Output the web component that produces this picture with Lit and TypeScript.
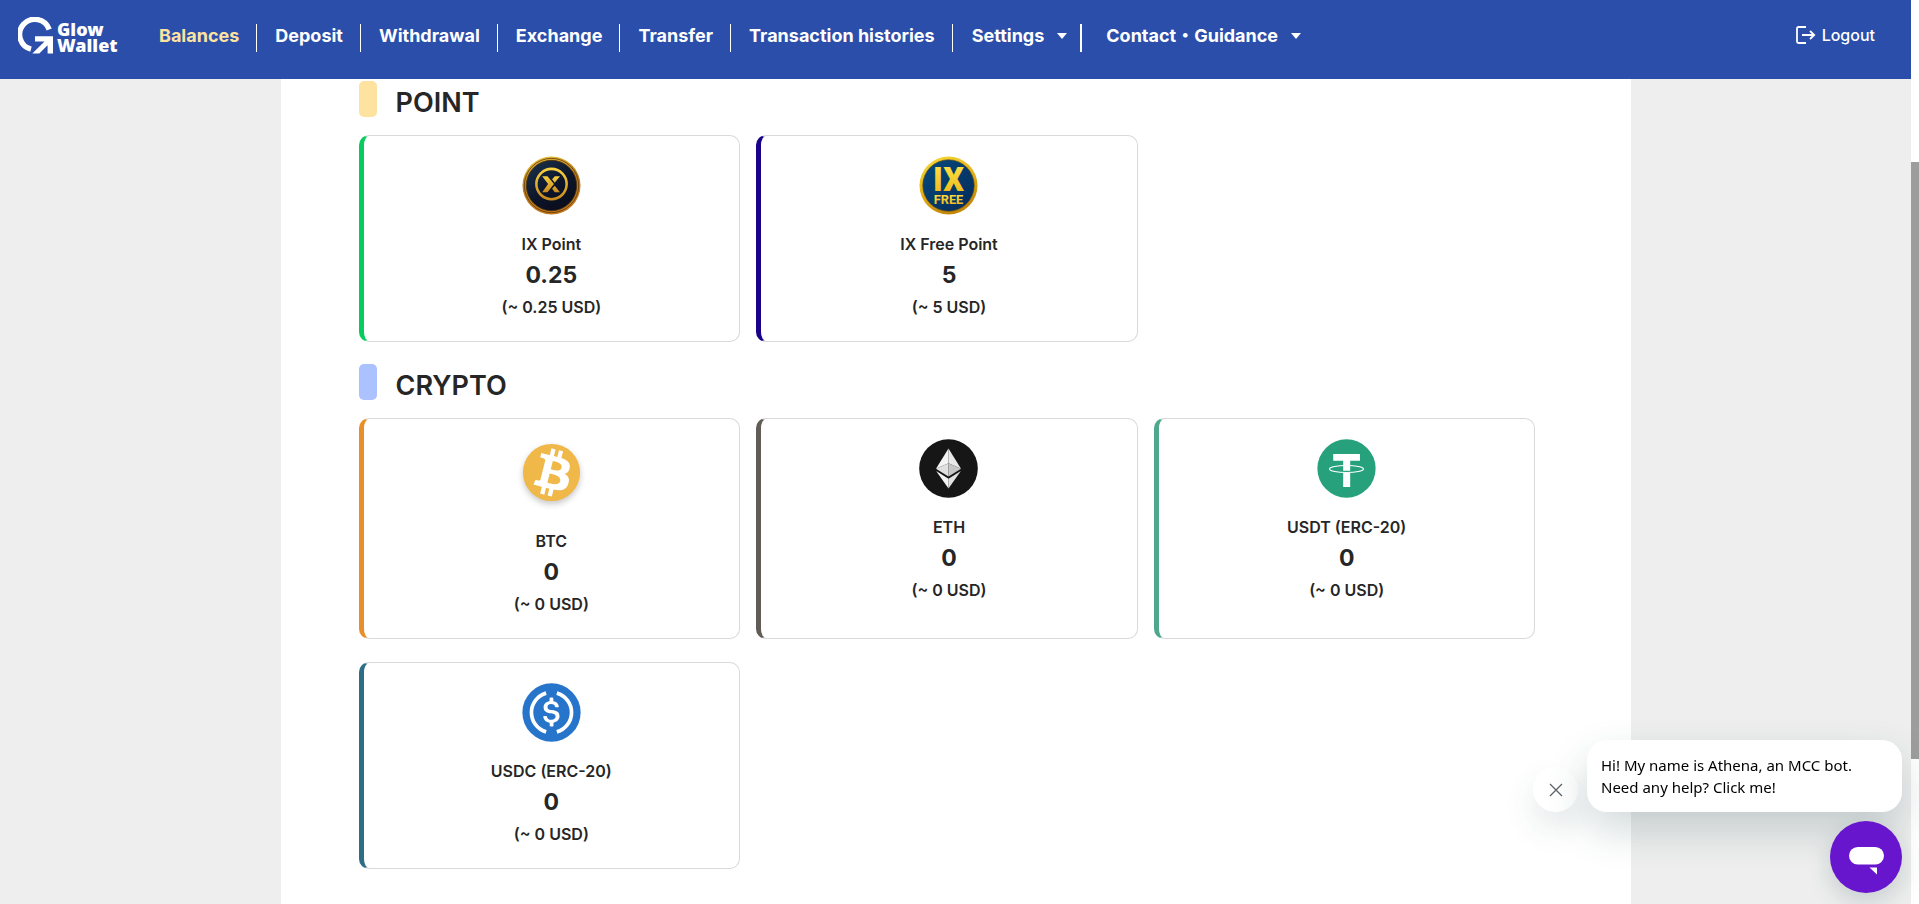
import { LitElement, html, css, svg, TemplateResult } from "lit";
import { customElement, property } from "lit/decorators.js";
import { classMap } from "lit/directives/class-map.js";

type Tone = "green" | "navy" | "orange" | "gray" | "teal" | "blue";

interface Asset {
  name: string;
  amount: string;
  usd: string;
  tone: Tone;
  icon: string;
}

const POINTS: Asset[] = [
  { name: "IX Point", amount: "0.25", usd: "0.25", tone: "green", icon: "ix" },
  { name: "IX Free Point", amount: "5", usd: "5", tone: "navy", icon: "ixfree" },
];

const CRYPTO: Asset[] = [
  { name: "BTC", amount: "0", usd: "0", tone: "orange", icon: "btc" },
  { name: "ETH", amount: "0", usd: "0", tone: "gray", icon: "eth" },
  { name: "USDT (ERC-20)", amount: "0", usd: "0", tone: "teal", icon: "usdt" },
  { name: "USDC (ERC-20)", amount: "0", usd: "0", tone: "blue", icon: "usdc" },
];

const ICONS: Record<string, TemplateResult> = {
  ix: svg`
    <defs>
      <linearGradient id="g1" x1="0" y1="0" x2="0.3" y2="1">
        <stop offset="0" stop-color="#f2cc3c" /><stop offset="0.5" stop-color="#b9801d" /><stop offset="1" stop-color="#c27a1c" />
      </linearGradient>
      <linearGradient id="g2" x1="0" y1="0" x2="0.7" y2="1">
        <stop offset="0" stop-color="#1c3550" /><stop offset="0.6" stop-color="#0d1529" /><stop offset="1" stop-color="#0a0d1c" />
      </linearGradient>
      <linearGradient id="g3" x1="0" y1="0" x2="0" y2="1">
        <stop offset="0" stop-color="#f8d13f" /><stop offset="1" stop-color="#c98a1f" />
      </linearGradient>
    </defs>
    <circle cx="30" cy="30" r="29.5" fill="url(#g1)" />
    <circle cx="30" cy="30" r="27.6" fill="none" stroke="#5c3510" stroke-width="0.8" />
    <circle cx="30" cy="30" r="25.6" fill="url(#g2)" stroke="#4a2b0c" stroke-width="0.8" />
    <circle cx="30" cy="28.5" r="15.4" fill="none" stroke="url(#g3)" stroke-width="2.6" />
    <path d="M20.500 20.500h5.400l6.600 8-6.600 8.300h-5.400l6-8.300z" fill="url(#g3)" />
    <path d="M38.600 20.500h-5.200l-2.800 3.200 2.700 3.400zM38.600 36.800h-5.200l-2.800-3.400 2.700-3.200z" fill="url(#g3)" />`,
  ixfree: svg`
    <defs>
      <linearGradient id="f1" x1="0" y1="0" x2="0.4" y2="1">
        <stop offset="0" stop-color="#f9dd3f" /><stop offset="0.6" stop-color="#e3ad13" /><stop offset="1" stop-color="#c4880b" />
      </linearGradient>
      <linearGradient id="f2" x1="0" y1="0" x2="1" y2="1">
        <stop offset="0" stop-color="#064a80" /><stop offset="1" stop-color="#042a57" />
      </linearGradient>
      <linearGradient id="f3" x1="0" y1="0" x2="0" y2="1">
        <stop offset="0" stop-color="#ffe54a" /><stop offset="1" stop-color="#ecb513" />
      </linearGradient>
    </defs>
    <circle cx="30" cy="30" r="29.5" fill="url(#f1)" />
    <circle cx="30" cy="30" r="26.2" fill="url(#f2)" stroke="#6d5410" stroke-width="0.7" />
    <text x="30" y="35.500" text-anchor="middle" font-family="Roboto, sans-serif" font-weight="900" font-size="33" fill="url(#f3)">IX</text>
    <text x="30" y="48.500" text-anchor="middle" font-family="Roboto, sans-serif" font-weight="700" font-size="13" fill="url(#f3)">FREE</text>`,
  btc: svg`
    <g transform="scale(1.875)">
      <circle cx="16" cy="16" r="15.5" fill="#f0b749" />
      <path transform="translate(16.1 16) scale(1.31) translate(-15.7 -16)" fill="#fff" d="M23.189 14.02c.314-2.096-1.283-3.223-3.465-3.975l.708-2.84-1.728-.43-.69 2.765c-.454-.114-.92-.22-1.385-.326l.695-2.783L15.596 6l-.708 2.839c-.376-.086-.746-.17-1.104-.26l.002-.009-2.384-.595-.46 1.846s1.283.294 1.256.312c.7.175.826.638.805 1.006l-.806 3.235c.048.012.11.03.18.057l-.183-.045-1.13 4.532c-.086.212-.303.531-.793.41.018.025-1.256-.313-1.256-.313l-.858 1.978 2.25.561c.418.105.828.215 1.231.318l-.715 2.872 1.727.43.708-2.84c.472.127.93.245 1.378.357l-.706 2.828 1.728.43.715-2.866c2.948.558 5.164.333 6.097-2.333.752-2.146-.037-3.385-1.588-4.192 1.13-.26 1.98-1.003 2.207-2.538zm-3.95 5.538c-.533 2.147-4.148.986-5.32.695l.95-3.805c1.172.293 4.929.872 4.37 3.11zm.535-5.569c-.487 1.953-3.495.96-4.47.717l.86-3.45c.975.243 4.118.696 3.61 2.733z" />
    </g>`,
  eth: svg`
    <g transform="scale(1.875)">
      <circle cx="16" cy="16" r="15.9" fill="#161616" />
      <path d="M16 5.100 9.200 16.200 16 13.200z" fill="#f4f4f4" />
      <path d="M16 5.100 22.800 16.200 16 13.200z" fill="#e8e8e8" />
      <path d="M16 13.200 9.200 16.200 16 20.300z" fill="#e0e0e0" />
      <path d="M16 13.200 22.800 16.200 16 20.300z" fill="#c6c6c6" />
      <path d="M9.300 17.400 16 21.500v5.400z" fill="#f4f4f4" />
      <path d="M22.700 17.400 16 21.500v5.400z" fill="#e2e2e2" />
    </g>`,
  usdt: svg`
    <g transform="scale(1.875)">
      <circle cx="16" cy="16" r="15.8" fill="#27a17c" />
      <path d="M8.800 8.200h14.500v3.600h-5.300v5.400h-3.800v-5.400H8.800zM14.200 18.400h3.800v7.700h-3.800z" fill="#fff" />
      <ellipse cx="16" cy="16.3" rx="9.2" ry="1.9" fill="none" stroke="#fff" stroke-width="0.6" />
    </g>`,
  usdc: svg`
    <g transform="scale(1.875)">
      <circle cx="16" cy="16" r="15.8" fill="#2775ca" />
      <path d="M13.100 5.500a10.900 10.900 0 0 0 0 21M18.900 5.500a10.900 10.900 0 0 1 0 21" fill="none" stroke="#fff" stroke-width="2" />
      <path transform="translate(16 16) scale(1.08) translate(-16 -16.2)" fill="#fff" d="M20.022 18.124c0-2.124-1.28-2.852-3.84-3.156-1.828-.243-2.193-.728-2.193-1.578 0-.85.61-1.396 1.828-1.396 1.097 0 1.707.364 2.011 1.275a.458.458 0 00.427.303h.975a.416.416 0 00.427-.425v-.06a3.04 3.04 0 00-2.743-2.489V9.142c0-.243-.183-.425-.487-.486h-.915c-.243 0-.426.182-.487.486v1.396c-1.829.242-2.986 1.456-2.986 2.974 0 2.002 1.218 2.791 3.778 3.095 1.707.303 2.255.668 2.255 1.639 0 .97-.853 1.638-2.011 1.638-1.585 0-2.133-.667-2.316-1.578-.06-.242-.244-.364-.427-.364h-1.036a.416.416 0 00-.426.425v.06c.243 1.518 1.219 2.61 3.23 2.914v1.457c0 .242.183.425.487.485h.915c.243 0 .426-.182.487-.485V21.34c1.829-.303 3.047-1.578 3.047-3.217z" />
    </g>`,
};

@customElement("balance-card")
export class BalanceCard extends LitElement {
  @property({ attribute: false }) asset!: Asset;

  static styles = css`
    :host {
      display: block;
    }
    .card {
      box-sizing: border-box;
      height: 100%;
      display: flex;
      flex-direction: column;
      align-items: center;
      padding: 20px 20px 21px;
      border: 1px solid #d9d9d9;
      border-left-width: 5px;
      border-radius: 10px;
      background: #fff;
      color: #262626;
      font-weight: 600;
    }
    .green { border-left-color: #08cb5f; }
    .navy { border-left-color: #1a0289; }
    .orange { border-left-color: #e88e2a; }
    .gray { border-left-color: #615c55; }
    .teal { border-left-color: #4fa88e; }
    .blue { border-left-color: #2c6e86; }
    .icon {
      display: block;
      width: 59px;
      height: 59px;
      margin-bottom: 16px;
    }
    .raised {
      margin: 4px 0 26px;
      filter: drop-shadow(0 3px 3px rgba(0, 0, 0, 0.22));
    }
    .name,
    .usd {
      margin: 0;
      font-size: 16px;
      line-height: 26px;
    }
    .amount {
      margin: 0;
      font-size: 23px;
      font-weight: 700;
      line-height: 37px;
    }
  `;

  render() {
    const a = this.asset;
    return html`
      <article class=${classMap({ card: true, [a.tone]: true })}>
        <svg class=${classMap({ icon: true, raised: a.icon === "btc" })} viewBox="0 0 60 60" aria-hidden="true">
          ${ICONS[a.icon]}
        </svg>
        <p class="name">${a.name}</p>
        <p class="amount">${a.amount}</p>
        <p class="usd">(~ ${a.usd} USD)</p>
      </article>
    `;
  }
}

@customElement("site-header")
export class SiteHeader extends LitElement {
  static styles = css`
    :host {
      display: block;
    }
    .bar {
      display: flex;
      align-items: center;
      padding: 17px 36px 26px 18px;
      background: #2a4eaa;
      color: #fff;
    }
    .logo {
      display: flex;
      align-items: center;
      gap: 3px;
      width: 126px;
      height: 36px;
      color: #fff;
      text-decoration: none;
    }
    .mark {
      width: 36px;
      height: 37px;
    }
    .brand {
      font: 900 18px/16px "Noto Sans", sans-serif;
      padding-top: 3px;
    }
    .nav {
      margin-top: 6px;
    }
    .list {
      display: flex;
      margin: 0;
      padding: 0;
      list-style: none;
    }
    .item {
      display: flex;
      height: 28px;
      padding: 0 17px 0 18px;
      border-right: 1px solid #fff;
    }
    .item:first-child {
      padding-left: 15px;
    }
    .wide {
      padding: 0 13px 0 19px;
      border-right-width: 2px;
    }
    .last {
      padding-left: 24px;
      border-right: 0;
    }
    .link {
      display: flex;
      align-items: center;
      gap: 13px;
      height: 24px;
      padding: 0;
      border: 0;
      background: none;
      color: #fff;
      font: 700 18px/24px Inter, "Noto Sans CJK JP", sans-serif;
      white-space: nowrap;
      text-decoration: none;
      cursor: pointer;
    }
    .active {
      color: #fde2a0;
    }
    .caret {
      width: 10px;
      height: 6px;
    }
    .logout {
      display: flex;
      align-items: center;
      gap: 6px;
      margin-left: auto;
      padding: 0;
      border: 0;
      background: none;
      color: #fff;
      font: 500 16px/24px Inter, sans-serif;
      cursor: pointer;
    }
    .exit {
      width: 20px;
      height: 18px;
    }
  `;

  private caret() {
    return html`<svg class="caret" viewBox="0 0 10 6" aria-hidden="true"><path d="M0 0h10L5 6z" fill="#fff" /></svg>`;
  }

  render() {
    const links = ["Balances", "Deposit", "Withdrawal", "Exchange", "Transfer", "Transaction histories"];
    return html`
      <header class="bar">
        <a class="logo" href="#">
          <svg class="mark" viewBox="0 0 36 37" aria-hidden="true">
            <path d="M31.200 12.500A15.200 15.200 0 1 0 13 32.200" fill="none" stroke="#fff" stroke-width="5.4" />
            <path d="M17 19.200h18v17.300h-5.400v-8.300l-8.300 8.300h-7l12.200-12.100H17z" fill="#fff" />
          </svg>
          <span class="brand">Glow<br />Wallet</span>
        </a>
        <nav class="nav">
          <ul class="list">
            ${links.map(
              (label, i) => html`<li class="item">
                <a class=${classMap({ link: true, active: i === 0 })} href="#">${label}</a>
              </li>`
            )}
            <li class="item wide"><button class="link" type="button">Settings ${this.caret()}</button></li>
            <li class="item last"><button class="link" type="button">Contact・Guidance ${this.caret()}</button></li>
          </ul>
        </nav>
        <button class="logout" type="button">
          <svg class="exit" viewBox="0 0 20 18" aria-hidden="true">
            <path d="M10 1H2.500Q1 1 1 2.500v13Q1 17 2.500 17H10M6 9h12M14 5l4.200 4-4.200 4" fill="none" stroke="#fff" stroke-width="1.8" />
          </svg>
          Logout
        </button>
      </header>
    `;
  }
}

@customElement("chat-widget")
export class ChatWidget extends LitElement {
  static styles = css`
    :host {
      display: flex;
      flex-direction: column;
      align-items: flex-end;
      gap: 9px;
    }
    .row {
      display: flex;
      align-items: flex-end;
      gap: 9px;
    }
    .close {
      display: grid;
      place-items: center;
      width: 45px;
      height: 45px;
      padding: 0;
      border: 0;
      border-radius: 50%;
      background: #fff;
      box-shadow: 0 16px 32px rgba(30, 70, 70, 0.12);
      cursor: pointer;
    }
    .cross {
      width: 14px;
      height: 14px;
    }
    .bubble {
      box-sizing: border-box;
      width: 315px;
      margin: 0;
      padding: 14px;
      border-radius: 20px;
      background: #fff;
      box-shadow: 0 18px 40px rgba(30, 70, 70, 0.2);
      color: #000;
      font: 400 15px/22px "Noto Sans", sans-serif;
    }
    .open {
      width: 72px;
      height: 72px;
      padding: 0;
      border: 0;
      border-radius: 50%;
      background: #6716ce;
      box-shadow: 0 8px 24px rgba(30, 70, 70, 0.2);
      cursor: pointer;
    }
    .glyph {
      display: block;
      width: 72px;
      height: 72px;
    }
  `;

  render() {
    return html`
      <div class="row">
        <button class="close" type="button" aria-label="Close">
          <svg class="cross" viewBox="0 0 14 14"><path d="M1 1l12 12M13 1 1 13" stroke="#5b6468" stroke-width="1.3" /></svg>
        </button>
        <p class="bubble">Hi! My name is Athena, an MCC bot.<br />Need any help? Click me!</p>
      </div>
      <button class="open" type="button" aria-label="Open chat">
        <svg class="glyph" viewBox="0 0 72 72">
          <rect x="19" y="26" width="35" height="17.5" rx="8.7" fill="#fff" />
          <path d="M39.500 46.500H47V53.500z" fill="#fff" />
        </svg>
      </button>
    `;
  }
}

@customElement("app-root")
export class AppRoot extends LitElement {
  static styles = css`
    :host {
      display: grid;
      grid-template-columns: minmax(0, 1fr) 8px;
      min-height: 100vh;
      font-family: Inter, sans-serif;
      background: #eee;
    }
    .page {
      display: flex;
      flex-direction: column;
    }
    .main {
      box-sizing: border-box;
      flex: 1;
      width: 100%;
      max-width: 1350px;
      margin: 0 auto;
      padding: 2px 95px 32px 78px;
      background: #fff;
    }
    .heading {
      display: flex;
      gap: 19px;
      margin: 0 0 18px;
      color: #262626;
      font-size: 27px;
      font-weight: 600;
      line-height: 43px;
      height: 36px;
    }
    .heading::before {
      content: "";
      width: 18px;
      height: 36px;
      border-radius: 5px;
      background: #fde2a0;
    }
    .crypto::before {
      background: #abc2ff;
    }
    .grid {
      display: grid;
      grid-template-columns: repeat(3, minmax(0, 1fr));
      gap: 23px 16px;
      margin-bottom: 22px;
    }
    .track {
      background: #fff;
    }
    .thumb {
      height: 66vh;
      margin-top: 162px;
      background: #9d9d9d;
    }
    .chat {
      position: fixed;
      right: 17px;
      bottom: 11px;
    }
  `;

  private section(title: string, assets: Asset[], crypto: boolean) {
    return html`
      <section>
        <h2 class=${classMap({ heading: true, crypto })}>${title}</h2>
        <div class="grid">${assets.map((asset) => html`<balance-card .asset=${asset}></balance-card>`)}</div>
      </section>
    `;
  }

  render() {
    return html`
      <div class="page">
        <site-header></site-header>
        <main class="main">
          ${this.section("POINT", POINTS, false)} ${this.section("CRYPTO", CRYPTO, true)}
        </main>
      </div>
      <div class="track"><div class="thumb"></div></div>
      <chat-widget class="chat"></chat-widget>
    `;
  }
}
